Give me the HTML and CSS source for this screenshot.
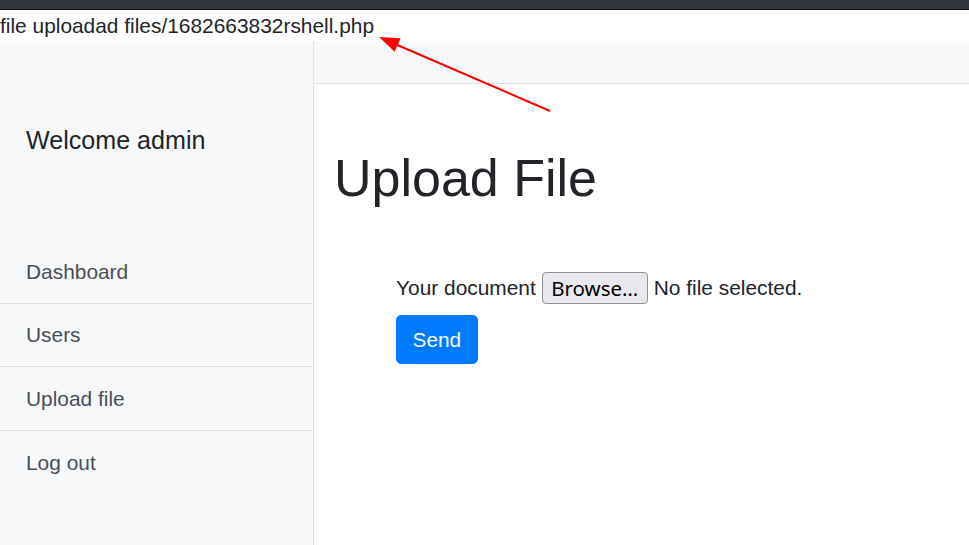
FILE: index.html
```html
<!DOCTYPE html>
<html>
<head>
<meta charset="utf-8">
<link rel="stylesheet" href="styles.css">
</head>
<body>
<div class="topbar"></div>
<div class="msg">file uploadad files/1682663832rshell.php</div>
<div class="layout">
  <aside class="sidebar">
    <h5 class="welcome">Welcome admin</h5>
    <nav class="nav">
      <a class="nav-item">Dashboard</a>
      <a class="nav-item">Users</a>
      <a class="nav-item">Upload file</a>
      <a class="nav-item last">Log out</a>
    </nav>
  </aside>
  <main class="main">
    <div class="header"></div>
    <h1 class="title">Upload File</h1>
    <form class="form">
      <div class="row">
        <span class="label">Your document</span>
        <span class="browse">Browse…</span>
        <span class="nofile">No file selected.</span>
      </div>
      <button type="button" class="send">Send</button>
    </form>
  </main>
</div>
<svg class="arrow" width="969" height="545" viewBox="0 0 969 545">
  <line x1="550" y1="111" x2="395" y2="44" stroke="#ff0000" stroke-width="2"/>
  <polygon points="379,37 394.6,51.8 400.6,38.2" fill="#ff0000"/>
</svg>
</body>
</html>
```
FILE: styles.css
```css
html, body {
  margin: 0;
  padding: 0;
  height: 100%;
  overflow: hidden;
}
body {
  font-family: "Liberation Sans", Arial, sans-serif;
  font-size: 20.9px;
  color: #212529;
  background: #fff;
  position: relative;
}
.topbar {
  height: 9px;
  background: #33363d;
  border-bottom: 1px solid #0c0c0d;
}
.msg {
  height: 31px;
  line-height: 31px;
  white-space: nowrap;
}
.layout {
  display: flex;
  height: 504px;
}
.sidebar {
  width: 313px;
  flex: none;
  background: #f8f9fa;
  border-right: 1px solid #dee2e6;
}
.welcome {
  margin: 84px 0 84px 0;
  padding-left: 26px;
  font-size: 25.1px;
  font-weight: normal;
  line-height: 31.2px;
  color: #212529;
}
.nav {
  display: flex;
  flex-direction: column;
}
.nav-item {
  padding: 15.7px 26px;
  line-height: 31.2px;
  color: #495057;
  border-bottom: 1px solid #dee2e6;
}
.nav-item.last {
  border-bottom: none;
}
.main {
  flex: 1;
  display: flex;
  flex-direction: column;
}
.header {
  height: 42px;
  background: #f8f9fa;
  border-bottom: 1px solid #dee2e6;
}
.title {
  margin: 62.6px 0 0 0;
  padding-left: 20px;
  font-size: 52px;
  font-weight: normal;
  line-height: 62.4px;
  color: #212529;
}
.form {
  margin: 63px 0 0 82px;
  display: flex;
  flex-direction: column;
  align-items: flex-start;
  gap: 11px;
}
.row {
  display: flex;
  align-items: center;
  height: 32px;
  white-space: nowrap;
}
.browse {
  margin-left: 6px;
  box-sizing: border-box;
  height: 32px;
  width: 106px;
  display: flex;
  align-items: center;
  justify-content: center;
  background: #e9e9ed;
  border: 1px solid #8f8f9d;
  border-radius: 4px;
  font-family: "Noto Sans", "DejaVu Sans", sans-serif;
  font-size: 20.5px;
  color: #000;
}
.nofile {
  margin-left: 6px;
}
.send {
  font-family: "Liberation Sans", Arial, sans-serif;
  font-size: 20.8px;
  line-height: 31.2px;
  padding: 7.8px 15.6px;
  color: #fff;
  background: #007bff;
  border: 1px solid #007bff;
  border-radius: 5px;
}
.arrow {
  position: absolute;
  left: 0;
  top: 0;
  pointer-events: none;
}
```
